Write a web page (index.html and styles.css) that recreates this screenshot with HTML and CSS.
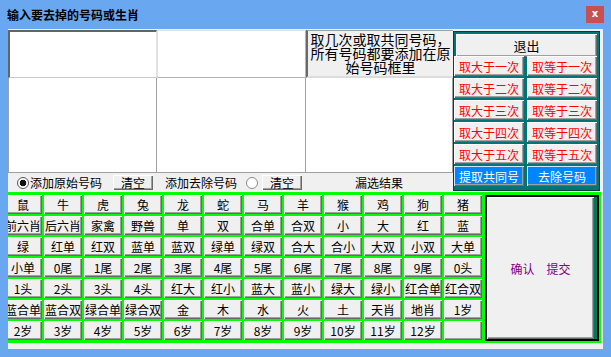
FILE: index.html
```html
<!DOCTYPE html>
<html lang="zh-CN">
<head>
  <meta charset="UTF-8">
  <title>输入要去掉的号码或生肖</title>
  <link rel="stylesheet" href="styles.css">
</head>
<body>
  <div class="window">
    <div class="title-bar">
      <span class="title">输入要去掉的号码或生肖</span>
      <span class="close">x</span>
    </div>

    <div class="client">
      <div class="top">
        <div class="inputs">
          <div class="boxes">
            <div class="box box-sunken"></div>
            <div class="box box-flat"></div>
            <div class="hint">取几次或取共同号码，所有号码都要添加在原始号码框里</div>
            <div class="box list"></div>
            <div class="box list"></div>
            <div class="box list"></div>
          </div>
          <div class="radio-row">
            <div class="opt-a">
              <span class="radio checked"></span>
              <span class="opt-text">添加原始号码</span>
              <button class="btn small-btn">清空</button>
            </div>
            <div class="opt-b">
              <span class="opt-text">添加去除号码</span>
              <span class="radio"></span>
              <button class="btn small-btn">清空</button>
            </div>
            <div class="result-label">漏选结果</div>
          </div>
        </div>

        <div class="action-panel">
          <button class="btn exit-btn">退出</button>
          <button class="btn red-btn">取大于一次</button>
          <button class="btn red-btn">取等于一次</button>
          <button class="btn red-btn">取大于二次</button>
          <button class="btn red-btn">取等于二次</button>
          <button class="btn red-btn">取大于三次</button>
          <button class="btn red-btn">取等于三次</button>
          <button class="btn red-btn">取大于四次</button>
          <button class="btn red-btn">取等于四次</button>
          <button class="btn red-btn">取大于五次</button>
          <button class="btn red-btn">取等于五次</button>
          <button class="btn blue-btn">提取共同号</button>
          <button class="btn blue-btn">去除号码</button>
        </div>
      </div>

      <div class="bottom">
        <div class="grid-wrap">
          <div class="cell-grid">
            <span class="btn cell">鼠</span><span class="btn cell">牛</span><span class="btn cell">虎</span><span class="btn cell">兔</span><span class="btn cell">龙</span><span class="btn cell">蛇</span><span class="btn cell">马</span><span class="btn cell">羊</span><span class="btn cell">猴</span><span class="btn cell">鸡</span><span class="btn cell">狗</span><span class="btn cell">猪</span>
            <span class="btn cell">前六肖</span><span class="btn cell">后六肖</span><span class="btn cell">家禽</span><span class="btn cell">野兽</span><span class="btn cell">单</span><span class="btn cell">双</span><span class="btn cell">合单</span><span class="btn cell">合双</span><span class="btn cell">小</span><span class="btn cell">大</span><span class="btn cell">红</span><span class="btn cell">蓝</span>
            <span class="btn cell">绿</span><span class="btn cell">红单</span><span class="btn cell">红双</span><span class="btn cell">蓝单</span><span class="btn cell">蓝双</span><span class="btn cell">绿单</span><span class="btn cell">绿双</span><span class="btn cell">合大</span><span class="btn cell">合小</span><span class="btn cell">大双</span><span class="btn cell">小双</span><span class="btn cell">大单</span>
            <span class="btn cell">小单</span><span class="btn cell">0尾</span><span class="btn cell">1尾</span><span class="btn cell">2尾</span><span class="btn cell">3尾</span><span class="btn cell">4尾</span><span class="btn cell">5尾</span><span class="btn cell">6尾</span><span class="btn cell">7尾</span><span class="btn cell">8尾</span><span class="btn cell">9尾</span><span class="btn cell">0头</span>
            <span class="btn cell">1头</span><span class="btn cell">2头</span><span class="btn cell">3头</span><span class="btn cell">4头</span><span class="btn cell">红大</span><span class="btn cell">红小</span><span class="btn cell">蓝大</span><span class="btn cell">蓝小</span><span class="btn cell">绿大</span><span class="btn cell">绿小</span><span class="btn cell">红合单</span><span class="btn cell">红合双</span>
            <span class="btn cell">蓝合单</span><span class="btn cell">蓝合双</span><span class="btn cell">绿合单</span><span class="btn cell">绿合双</span><span class="btn cell">金</span><span class="btn cell">木</span><span class="btn cell">水</span><span class="btn cell">火</span><span class="btn cell">土</span><span class="btn cell">天肖</span><span class="btn cell">地肖</span><span class="btn cell">1岁</span>
            <span class="btn cell">2岁</span><span class="btn cell">3岁</span><span class="btn cell">4岁</span><span class="btn cell">5岁</span><span class="btn cell">6岁</span><span class="btn cell">7岁</span><span class="btn cell">8岁</span><span class="btn cell">9岁</span><span class="btn cell">10岁</span><span class="btn cell">11岁</span><span class="btn cell">12岁</span><span class="btn cell"></span>
          </div>
        </div>
        <div class="confirm-panel">
          <button class="btn confirm-btn"><span>确认</span><span>提交</span></button>
        </div>
      </div>
    </div>
  </div>
</body>
</html>
```

FILE: styles.css
```css
*, *::before, *::after { box-sizing: border-box; }
body { margin: 0; font-family: "Noto Sans CJK SC", "Liberation Sans", sans-serif; font-size: 12px; color: #000; }

/* ウィンドウ枠 */
.window { width: 611px; height: 357px; background-color: #69a8f1; display: flex; flex-direction: column; }
.title-bar { height: 29px; display: flex; justify-content: space-between; align-items: flex-start; padding: 0 7px; }
.title { font-weight: bold; font-size: 12px; line-height: 14px; margin-top: 8px; }
.close { margin-top: 6px; width: 18px; height: 17px; background-color: #c75050; color: #fff; font: bold 10px/16px "DejaVu Sans", sans-serif; text-align: center; }
.client { margin: 0 8px; height: 320px; background-color: #f0f0f0; }

/* 共通ボタン */
.btn {
  display: flex;
  align-items: center;
  justify-content: center;
  margin: 0;
  padding: 0;
  border: none;
  background-color: #f0f0f0;
  box-shadow: inset 1px 1px #fff, inset -1px -1px #696969, inset -2px -2px #a0a0a0;
  font-family: inherit;
  font-size: 12px;
  color: #000;
  white-space: nowrap;
}

/* 上段 */
.top { display: flex; height: 163px; padding-top: 1px; }
.inputs { width: 445px; }
.boxes { display: grid; grid-template-columns: 149px 149px 147px; grid-template-rows: 48px 95px; }
.box { background-color: #fff; border: 1px solid #a0a0a0; }
.box-sunken { border-top: 2px solid #646464; border-left: 2px solid #646464; border-right: 1px solid #e3e3e3; border-bottom: 1px solid #c8c8c8; }
.box-flat { border: 1px solid #e0e0e0; border-bottom-color: #b4b4b4; border-right-color: #b4b4b4; }
.list { border-top: none; }
.list + .list { border-left: none; }
.hint {
  background-color: #f0f0f0;
  border-left: 2px solid #696969;
  border-top: 1px solid #a0a0a0;
  border-bottom: 2px solid #dcdcdc;
  font-size: 14px;
  line-height: 14px;
  text-align: center;
  padding: 1px 1px 0;
}

.radio-row { display: flex; align-items: center; height: 19px; }
.opt-a { width: 149px; display: flex; align-items: center; padding-left: 9px; }
.opt-b { width: 148px; display: flex; align-items: center; padding-left: 8px; }
.opt-a .opt-text { margin-left: 1px; width: 72px; }
.opt-b .opt-text { width: 72px; }
.opt-a .small-btn { margin-left: 11px; }
.opt-b .radio { margin-left: 9px; }
.opt-b .small-btn { margin-left: 4px; }
.radio { width: 12px; height: 12px; border-radius: 50%; border: 1px solid #8a8a8a; background: #fff; flex-shrink: 0; }
.radio.checked { border-color: #555; background: radial-gradient(circle, #111 0 3px, #fff 3.6px); }
.small-btn { width: 40px; height: 15px; font-size: 12px; }
.result-label { width: 148px; text-align: center; }

/* 右側操作パネル */
.action-panel {
  width: 147px;
  height: 160px;
  margin-top: 1px;
  border: 1px solid #0d3b3b;
  background-color: #007575;
  display: grid;
  grid-template-columns: 70px 70px;
  grid-auto-rows: 20px;
  column-gap: 3px;
  row-gap: 2px;
  padding: 2px 2px 0 0;
  align-content: start;
}
.exit-btn { grid-column: span 2; height: 23px; margin-left: 2px; font-size: 13px; }
.red-btn { color: #f00; font-size: 12px; }
.blue-btn { background-color: #0084ff; color: #fff; font-size: 12px; box-shadow: inset 1px 1px #cfe6ff, inset -1px -1px #696969, inset -2px -2px #a0a0a0; }

/* 下段 */
.bottom { display: flex; width: 593px; height: 151px; padding-top: 3px; background-color: #00ff00; }
.grid-wrap { width: 474px; height: 145px; overflow: hidden; }
.cell-grid { margin-left: -4px; width: 478px; display: grid; grid-template-columns: repeat(12, 38px); grid-auto-rows: 19px; gap: 2px; }
.cell { overflow: visible; }

.confirm-panel { margin-left: 3px; width: 114px; height: 146px; border: 2px solid #000; background-color: #00785c; display: flex; }
.confirm-btn { width: 107px; height: 100%; color: #800080; gap: 12px; }
```
